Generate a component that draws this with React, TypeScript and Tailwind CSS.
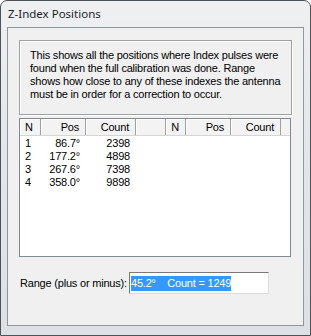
const rows = [
  { n: "1", pos: "86.7°", count: "2398" },
  { n: "2", pos: "177.2°", count: "4898" },
  { n: "3", pos: "267.6°", count: "7398" },
  { n: "4", pos: "358.0°", count: "9898" },
];

const cols = [
  { label: "N", w: "w-[21px]", align: "text-left pl-[5px]" },
  { label: "Pos", w: "w-[45px]", align: "text-right pr-[6px]" },
  { label: "Count", w: "w-[50px]", align: "text-right pr-[6px]" },
  { label: "", w: "w-[30px]", align: "" },
  { label: "N", w: "w-[20px]", align: "text-right pr-[6px]" },
  { label: "Pos", w: "w-[45px]", align: "text-right pr-[6px]" },
  { label: "Count", w: "w-[50px]", align: "text-right pr-[6px]" },
];

export default function App() {
  return (
    <div
      className="w-[311px] h-[336px] rounded-t-[7px] border border-[#4d5257] bg-gradient-to-b from-[#eef0f2] via-[#e2e5e9] to-[#dde1e5] flex flex-col overflow-hidden"
      style={{ fontFamily: '"Liberation Sans", Arial, sans-serif' }}
    >
      <div className="h-[26px] flex items-center pl-[7px] text-[11.5px] text-[#1e1e1e]" style={{ fontFamily: '"Noto Sans", sans-serif' }}>
        Z-Index Positions
      </div>
      <div className="mx-[6px] mb-[9px] flex-1 border border-[#8f969e] bg-[#f0f0f0] flex flex-col pt-[12px] px-[11px] pb-[3px] text-[11px] tracking-[-0.2px] text-black">
        <div className="h-[75px] border border-[#a0a0a0] shadow-[inset_1px_1px_0_#ffffff,1px_1px_0_#ffffff] pl-[10px] pr-[6px] pt-[8px] leading-[13px]">
          This shows all the positions where Index pulses were found when the full calibration was done. Range shows how close to any of these indexes the antenna must be in order for a correction to occur.
        </div>
        <div className="mt-[3px] mr-[1px] h-[139px] border border-[#828790] bg-white flex flex-col">
          <div className="flex h-[17px] bg-white border-b border-[#d5d5d5]">
            {cols.map((c, i) => (
              <div
                key={i}
                className={`${c.w} ${c.align} h-full leading-[16px] border-r border-[#a0a0a0] shadow-[inset_1px_1px_0_#ffffff] bg-[#f3f3f3]`}
              >
                {c.label}
              </div>
            ))}
            <div className="flex-1 bg-[#f3f3f3]" />
          </div>
          <div className="pt-[1px]">
            {rows.map((r) => (
              <div key={r.n} className="flex h-[13px] leading-[13px]">
                <div className="w-[21px] pl-[5px]">{r.n}</div>
                <div className="w-[45px] text-right pr-[6px]">{r.pos}</div>
                <div className="w-[50px] text-right pr-[6px]">{r.count}</div>
              </div>
            ))}
          </div>
        </div>
        <div className="mt-[15px] flex items-center h-[22px]">
          <span className="w-[110px] pl-[1px] whitespace-nowrap">Range (plus or minus):</span>
          <div className="w-[140px] h-[22px] border border-[#7a7a7a] border-r-[#dcdcdc] border-b-[#dcdcdc] bg-white flex items-center pl-[1px]">
            <span className="bg-[#3399ff] text-white leading-[15px] whitespace-pre">45.2°    Count = 1249</span>
          </div>
        </div>
      </div>
    </div>
  );
}
